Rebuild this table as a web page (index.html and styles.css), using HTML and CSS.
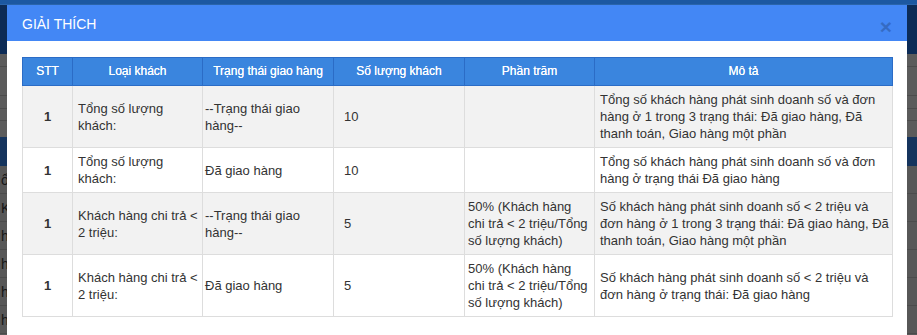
FILE: index.html
```html
<!DOCTYPE html>
<html lang="vi">
<head>
<meta charset="utf-8">
<title>Giải thích</title>
<link rel="stylesheet" href="styles.css">
</head>
<body>
<div class="page">
  <div class="topbar"></div>
  <div class="navbar"></div>
  <div class="grid-rows">
    <div class="grow g1"></div>
    <div class="grow g2"></div>
    <div class="grow g3"></div>
    <div class="grow g4"></div>
    <div class="grow g5"></div>
  </div>
  <div class="band"></div>
  <div class="list">
    <div class="li">ổ</div>
    <div class="li">Kl</div>
    <div class="li">h</div>
    <div class="li">h</div>
    <div class="li">h</div>
    <div class="li">h</div>
  </div>
</div>

<div class="modal">
  <div class="modal-header">
    <h4 class="modal-title">GIẢI THÍCH</h4>
    <span class="close">×</span>
  </div>
  <div class="modal-body">
    <table class="tbl">
      <colgroup>
        <col class="c1"><col class="c2"><col class="c3"><col class="c4"><col class="c5"><col class="c6">
      </colgroup>
      <thead>
        <tr>
          <th>STT</th>
          <th>Loại khách</th>
          <th>Trạng thái giao hàng</th>
          <th>Số lượng khách</th>
          <th>Phần trăm</th>
          <th>Mô tả</th>
        </tr>
      </thead>
      <tbody>
        <tr class="odd">
          <td class="stt">1</td>
          <td class="t2">Tổng số lượng khách:</td>
          <td class="t3">--Trạng thái giao hàng--</td>
          <td class="t4">10</td>
          <td class="t5"></td>
          <td class="t6">Tổng số khách hàng phát sinh doanh số và đơn hàng ở 1 trong 3 trạng thái: Đã giao hàng, Đã thanh toán, Giao hàng một phần</td>
        </tr>
        <tr>
          <td class="stt">1</td>
          <td class="t2">Tổng số lượng khách:</td>
          <td class="t3">Đã giao hàng</td>
          <td class="t4">10</td>
          <td class="t5"></td>
          <td class="t6">Tổng số khách hàng phát sinh doanh số và đơn hàng ở trạng thái Đã giao hàng</td>
        </tr>
        <tr class="odd">
          <td class="stt">1</td>
          <td class="t2">Khách hàng chi trả &lt; 2 triệu:</td>
          <td class="t3">--Trạng thái giao hàng--</td>
          <td class="t4">5</td>
          <td class="t5">50% (Khách hàng chi trả &lt; 2 triệu/Tổng số lượng khách)</td>
          <td class="t6">Số khách hàng phát sinh doanh số &lt; 2 triệu và đơn hàng ở 1 trong 3 trạng thái: Đã giao hàng, Đã thanh toán, Giao hàng một phần</td>
        </tr>
        <tr>
          <td class="stt">1</td>
          <td class="t2">Khách hàng chi trả &lt; 2 triệu:</td>
          <td class="t3">Đã giao hàng</td>
          <td class="t4">5</td>
          <td class="t5">50% (Khách hàng chi trả &lt; 2 triệu/Tổng số lượng khách)</td>
          <td class="t6">Số khách hàng phát sinh doanh số &lt; 2 triệu và đơn hàng ở trạng thái: Đã giao hàng</td>
        </tr>
      </tbody>
    </table>
  </div>
</div>
</body>
</html>
```
FILE: styles.css
```css
* { box-sizing: border-box; }
html, body {
  margin: 0;
  padding: 0;
  height: 100%;
  overflow: hidden;
}
body {
  background: #595959;
  font-family: "Liberation Sans", Arial, sans-serif;
  position: relative;
}

/* dimmed page behind the modal */
.page { width: 100%; }
.topbar {
  height: 5px;
  background: #1c58a1;
  border-bottom: 1px solid #2a64aa;
}
.navbar {
  height: 49px;
  background: #0c2b56;
}
.grid-rows { background: #5b5b5b; }
.grow { border-bottom: 1px solid #4c4c4c; }
.g1 { height: 13px; }
.g2 { height: 29px; }
.g3 { height: 13px; }
.g4 { height: 12px; }
.g5 { height: 16px; border-bottom: 0; }
.band {
  height: 29px;
  background: #15345d;
}
.list { background: #575757; }
.li {
  height: 28px;
  line-height: 28px;
  border-bottom: 1px solid #4b4b4b;
  font-size: 14px;
  color: #161616;
  padding-left: 1px;
}

/* modal */
.modal {
  position: absolute;
  left: 7px;
  top: 5px;
  width: 900px;
  height: 360px;
  background: #fff;
}
.modal-header {
  height: 36px;
  background: #4387f5;
  display: flex;
  align-items: center;
  justify-content: space-between;
  padding: 0 15px;
}
.modal-title {
  margin: 0;
  font-size: 14px;
  font-weight: normal;
  color: #fff;
  line-height: 20px;
  padding-top: 1px;
}
.close {
  font-size: 21px;
  font-weight: bold;
  color: #000;
  opacity: 0.2;
  line-height: 1;
  padding-top: 6px;
}
.modal-body {
  padding: 16px 15px 15px;
}

/* table */
.tbl {
  width: 870px;
  table-layout: fixed;
  border-collapse: collapse;
  border: 1px solid #dddddd;
  font-size: 13px;
  line-height: 17px;
  color: #333;
}
.c1 { width: 50px; }
.c2 { width: 130px; }
.c3 { width: 131px; }
.c4 { width: 131px; }
.c5 { width: 130px; }
.c6 { width: 298px; }

.tbl th {
  background: #3a85de;
  color: #fff;
  font-size: 12px;
  font-weight: normal;
  text-align: center;
  padding: 5px;
  border: 1px solid #2b6cc6;
  text-shadow: 0 0 0.4px #fff;
}
.tbl td {
  border: 1px solid #dddddd;
  padding: 5px;
  vertical-align: middle;
  text-align: left;
}
.tbl tr.odd td { background: #f2f2f2; }
.tbl td.stt { text-align: center; font-weight: bold; }
.tbl td.t2 { padding-left: 5px; padding-right: 2px; }
.tbl td.t3 { padding-left: 2px; padding-right: 5px; }
.tbl td.t4 { padding-left: 10px; }
.tbl td.t5 { padding-left: 3px; padding-right: 5px; }
.tbl td.t6 { padding-left: 5px; padding-right: 2px; }
```
